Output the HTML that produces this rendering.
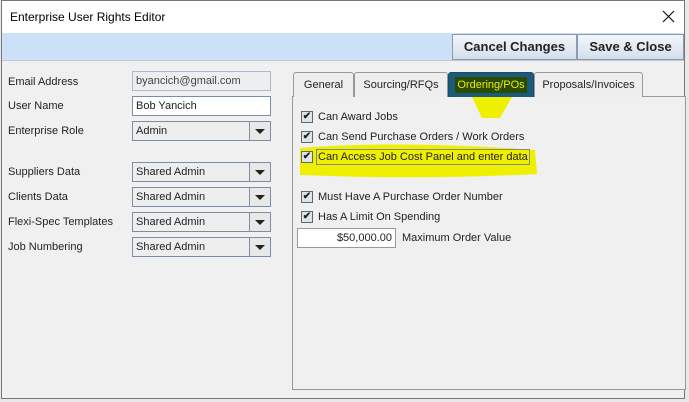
<!DOCTYPE html>
<html><head><style>
body{margin:0;width:689px;height:402px;overflow:hidden;background:#e8e8e8;font-family:"Liberation Sans",sans-serif;font-size:11px;color:#222;position:relative}
.a{position:absolute}
.win{left:1px;top:0;width:684px;height:399px;border:1px solid #777;background:#f0f0f0;box-sizing:border-box}
.lbl{position:absolute;left:8px;font-size:11px}
.fld{position:absolute;left:132px;width:139px;height:20px;box-sizing:border-box;border:1px solid #7a8ea8;background:#fff;padding:3px 3px 0;font-size:11px}
.cb{background:#eee}
.cb .ar{position:absolute;right:0;top:0;width:20px;height:18px;border-left:1px solid #7a8ea8;background:#e8e8e8}
.cb .ar:after{content:"";position:absolute;left:5px;top:7px;border-left:5px solid transparent;border-right:5px solid transparent;border-top:5px solid #222}
.btn{position:absolute;top:34px;height:26px;box-sizing:border-box;border:1px solid #8a9ab0;background:linear-gradient(#f4f7fb,#d4dfec);font-weight:bold;font-size:13px;text-align:center;line-height:24px;color:#222}
.tab{position:absolute;top:72px;height:25px;box-sizing:border-box;border:1px solid #999;border-bottom:none;background:#eee;text-align:center;line-height:25px;font-size:11px;border-radius:3px 3px 0 0}
.ck{position:absolute;left:301px;width:12px;height:12px;border:1px solid #666;background:#dde4ec;box-sizing:border-box;font-size:10px;line-height:10px;text-align:center;font-weight:bold}
.ct{position:absolute;left:318px;font-size:11px}
</style></head><body>
<div class="a win"></div>
<div class="a" style="left:2px;top:1px;width:682px;height:32px;background:#fff"></div>
<div class="a" style="left:10px;top:10px;font-size:12px;color:#000">Enterprise User Rights Editor</div>
<svg class="a" style="left:662px;top:10px" width="14" height="14"><path d="M1 1L12 12M12 1L1 12" stroke="#111" stroke-width="1.2"/></svg>
<div class="a" style="left:2px;top:33px;width:682px;height:27px;background:#cce0f8;border-bottom:1px solid #c0c8d0"></div>
<div class="btn" style="left:452px;width:125px">Cancel Changes</div>
<div class="btn" style="left:577px;width:107px">Save &amp; Close</div>

<div class="lbl" style="top:76px">Email Address</div>
<div class="fld" style="top:71px;background:#eee;border-color:#a8bcd0;color:#444">byancich@gmail.com</div>
<div class="lbl" style="top:100px">User Name</div>
<div class="fld" style="top:96px">Bob Yancich</div>
<div class="lbl" style="top:125px">Enterprise Role</div>
<div class="fld cb" style="top:121px">Admin<div class="ar"></div></div>
<div class="lbl" style="top:166px">Suppliers Data</div>
<div class="fld cb" style="top:162px">Shared Admin<div class="ar"></div></div>
<div class="lbl" style="top:191px">Clients Data</div>
<div class="fld cb" style="top:187px">Shared Admin<div class="ar"></div></div>
<div class="lbl" style="top:216px">Flexi-Spec Templates</div>
<div class="fld cb" style="top:212px">Shared Admin<div class="ar"></div></div>
<div class="lbl" style="top:241px">Job Numbering</div>
<div class="fld cb" style="top:237px">Shared Admin<div class="ar"></div></div>

<div class="a" style="left:292px;top:96px;width:394px;height:294px;border:1px solid #999;box-sizing:border-box;background:#f0f0f0"></div>
<div class="tab" style="left:293px;width:61px">General</div>
<div class="tab" style="left:354px;width:94px">Sourcing/RFQs</div>
<div class="tab" style="left:448px;width:86px;background:#1a5a7a;border-color:#1a4a66"><span style="background:#2a4a00;color:#e8f000;padding:2px 2px">Ordering/POs</span></div>
<div class="tab" style="left:534px;width:109px">Proposals/Invoices</div>

<svg class="a" style="left:0;top:0" width="689" height="402"><path d="M472 97 L512 97 L500 118 L482 118 Z" fill="#eef000"/><path d="M300 148 Q400 140 535 150 L537 174 Q420 180 300 175 Z" fill="#eef000"/></svg>

<div class="ck" style="top:111px">✔</div><div class="ct" style="top:111px">Can Award Jobs</div>
<div class="ck" style="top:131px">✔</div><div class="ct" style="top:131px">Can Send Purchase Orders / Work Orders</div>
<div class="ck" style="top:151px">✔</div><div class="ct" style="top:149px;border:1px solid #888;padding:1px 1px;left:316px">Can Access Job Cost Panel and enter data</div>
<div class="ck" style="top:191px">✔</div><div class="ct" style="top:191px">Must Have A Purchase Order Number</div>
<div class="ck" style="top:211px">✔</div><div class="ct" style="top:211px">Has A Limit On Spending</div>
<div class="a" style="left:297px;top:228px;width:99px;height:20px;box-sizing:border-box;border:1px solid #999;background:#fff;text-align:right;padding:3px 3px;font-size:11px">$50,000.00</div>
<div class="ct" style="left:402px;top:232px">Maximum Order Value</div>
</body></html>
